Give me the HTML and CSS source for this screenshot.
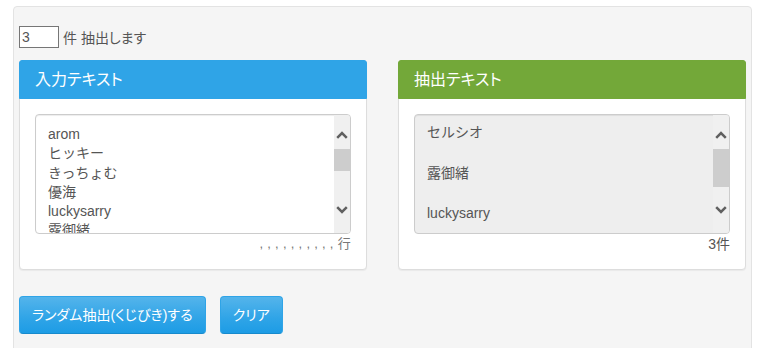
FILE: index.html
```html
<!DOCTYPE html>
<html lang="ja">
<head>
  <meta charset="UTF-8">
  <title>ランダム抽出</title>
  <link rel="stylesheet" href="styles.css">
</head>
<body>
  <div class="well">
    <div class="count-row">
      <input type="text" class="count-input" id="countInput" value="3"> 件 抽出します
    </div>

    <div class="panels">
      <!-- 入力 -->
      <div class="panel panel-primary">
        <div class="panel-heading">入力テキスト</div>
        <div class="panel-body">
          <div class="list-wrap">
            <textarea class="list-box" id="inputText">arom
ヒッキー
きっちょむ
優海
luckysarry
露御緒
セルシオ
みかん
たろう
ぽんた
ゆうき
はなこ
さくら</textarea>
            <div class="scrollbar">
              <div class="sb-btn sb-up">
                <svg width="12" height="8" viewBox="0 0 12 8"><path d="M1.2 6.8 L6 2 L10.8 6.8" fill="none" stroke="#606060" stroke-width="2.5"/></svg>
              </div>
              <div class="sb-track"><div class="sb-thumb" style="height: 22px"></div></div>
              <div class="sb-btn sb-down">
                <svg width="12" height="8" viewBox="0 0 12 8"><path d="M1.2 1.2 L6 6 L10.8 1.2" fill="none" stroke="#606060" stroke-width="2.5"/></svg>
              </div>
            </div>
          </div>
          <div class="counter counter-dots">, , , , , , , , , , 行</div>
        </div>
      </div>

      <!-- 抽出 -->
      <div class="panel panel-success">
        <div class="panel-heading">抽出テキスト</div>
        <div class="panel-body">
          <div class="list-wrap list-result">
            <textarea class="list-box" id="outputText" readonly>セルシオ

露御緒

luckysarry</textarea>
            <div class="scrollbar">
              <div class="sb-btn sb-up">
                <svg width="12" height="8" viewBox="0 0 12 8"><path d="M1.2 6.8 L6 2 L10.8 6.8" fill="none" stroke="#606060" stroke-width="2.5"/></svg>
              </div>
              <div class="sb-track"><div class="sb-thumb" style="height: 38px"></div></div>
              <div class="sb-btn sb-down">
                <svg width="12" height="8" viewBox="0 0 12 8"><path d="M1.2 1.2 L6 6 L10.8 1.2" fill="none" stroke="#606060" stroke-width="2.5"/></svg>
              </div>
            </div>
          </div>
          <div class="counter">3件</div>
        </div>
      </div>
    </div>

    <div class="actions">
      <button class="btn">ランダム抽出(くじびき)する</button>
      <button class="btn">クリア</button>
    </div>
  </div>
</body>
</html>
```

FILE: styles.css
```css
body {
  margin: 0;
  overflow: hidden;
  background: #fff;
  color: #555;
  font-family: "Liberation Sans", "Noto Sans CJK JP", sans-serif;
  font-size: 14px;
  font-feature-settings: "palt";
}
.well {
  margin: 6px 8px 0 13px;
  padding: 19px 5px;
  background: #f5f5f5;
  border: 1px solid #e3e3e3;
  border-radius: 4px;
}
.count-row {
  display: flex;
  align-items: center;
  gap: 4px;
  height: 22px;
  font-size: 14px;
}
.count-input {
  box-sizing: border-box;
  width: 40px;
  height: 22px;
  margin: 0;
  padding: 1px 2px;
  border: 1px solid #767676;
  font-family: inherit;
  font-size: 14px;
  color: #555;
  background: #fff;
}
.panels {
  display: grid;
  grid-template-columns: 1fr 1fr;
  gap: 31px;
  margin-top: 12px;
}
.panel {
  background: #fff;
  border: 1px solid #ddd;
  border-radius: 4px;
  box-shadow: 0 1px 1px rgba(0, 0, 0, 0.05);
}
.panel-heading {
  margin: -1px -1px 0;
  padding: 10px 15px;
  font-size: 16px;
  line-height: 17px;
  color: #fff;
  border-radius: 3px 3px 0 0;
}
.panel-primary .panel-heading {
  background: #2fa4e7;
  border: 1px solid #2fa4e7;
}
.panel-success .panel-heading {
  background: #73a839;
  border: 1px solid #73a839;
}
.panel-body {
  padding: 15px;
}
.list-wrap {
  display: flex;
  height: 120px;
  box-sizing: border-box;
  border: 1px solid #ccc;
  border-radius: 4px;
  overflow: hidden;
  background: #fff;
  box-shadow: inset 0 1px 1px rgba(0, 0, 0, 0.075);
}
.list-box {
  flex: 1;
  min-width: 0;
  margin: 0;
  padding: 10px 12px 7px;
  border: none;
  outline: none;
  font-family: inherit;
  font-size: 14px;
  line-height: 19.3px;
  color: #555;
  background: transparent;
  resize: none;
  overflow: hidden;
}
.list-result {
  background: #eee;
}
.list-result .list-box {
  padding-top: 7px;
  line-height: 20.3px;
}
.scrollbar {
  display: flex;
  flex-direction: column;
  width: 16px;
  background: #f0f0f0;
}
.sb-btn {
  display: flex;
  justify-content: center;
  align-items: flex-start;
  box-sizing: border-box;
  height: 34px;
}
.sb-up {
  padding-top: 16px;
}
.sb-down {
  padding-top: 7px;
}
.sb-track {
  flex: 1;
}
.sb-thumb {
  background: #cdcdcd;
}
.counter {
  text-align: right;
  font-size: 14px;
  line-height: 20px;
  color: #555;
}
.counter-dots {
  font-size: 13px;
  letter-spacing: 0.3px;
  color: #777;
}
.actions {
  display: flex;
  gap: 14px;
  margin-top: 26px;
}
.btn {
  padding: 8px 12px;
  font-family: inherit;
  font-size: 14px;
  line-height: 20px;
  color: #fff;
  background-image: linear-gradient(#54b4eb, #2fa4e7 60%, #1d9ce5);
  border: 1px solid #2fa4e7;
  border-bottom-color: #178acc;
  border-radius: 4px;
  font-feature-settings: "palt";
  cursor: pointer;
}
```
